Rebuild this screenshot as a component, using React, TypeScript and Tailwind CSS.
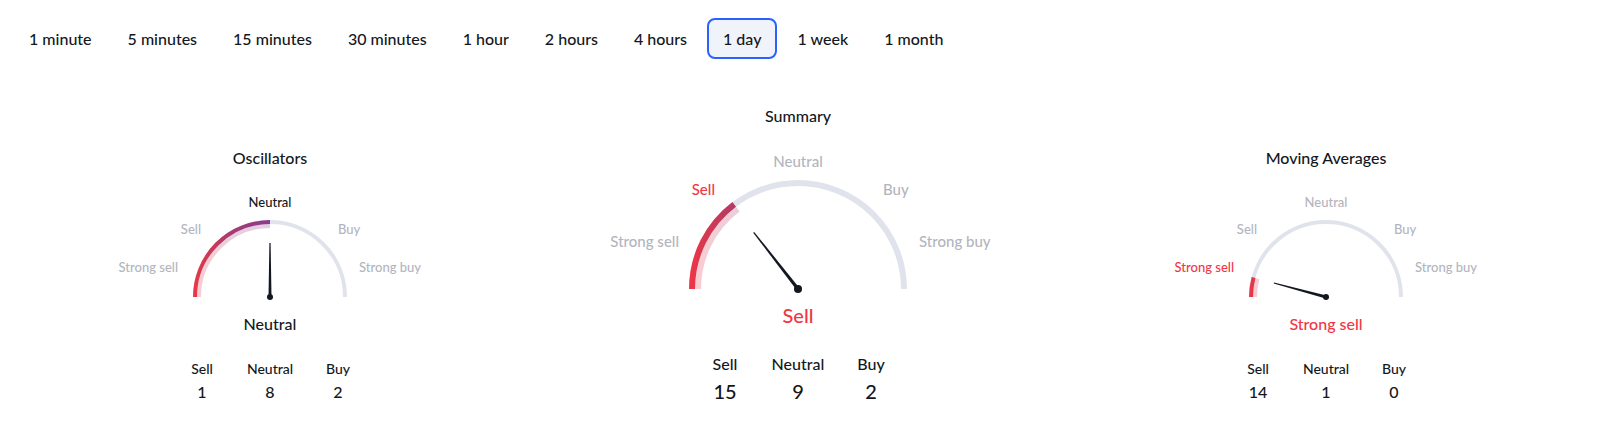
import React from 'react';

const tabs = ['1 minute', '5 minutes', '15 minutes', '30 minutes', '1 hour', '2 hours', '4 hours', '1 day', '1 week', '1 month'];

type Size = 'sm' | 'lg';

const geo = {
  sm: { w: 360, h: 110, ox: 180, oy: 107, r: 75, sw: 4, pr: 71, len: 54, dot: 3, base: 3 },
  lg: { w: 440, h: 145, ox: 220, oy: 140, r: 106, sw: 6, pr: 100, len: 72, dot: 4, base: 3.6 },
};

// label placement per gauge size, written out so tailwind picks them up
const labelCls = {
  sm: {
    box: 'w-[360px] h-[110px] text-[13px] leading-4',
    neutral: 'absolute left-1/2 -translate-x-1/2 top-[4px]',
    sell: 'absolute right-[249px] top-[31px]',
    buy: 'absolute left-[248px] top-[31px]',
    strongSell: 'absolute right-[272px] top-[69px] whitespace-nowrap',
    strongBuy: 'absolute left-[269px] top-[69px] whitespace-nowrap',
  },
  lg: {
    box: 'w-[440px] h-[145px] text-[15px] leading-5',
    neutral: 'absolute left-1/2 -translate-x-1/2 top-[2px]',
    sell: 'absolute right-[303px] top-[30px]',
    buy: 'absolute left-[305px] top-[30px]',
    strongSell: 'absolute right-[339px] top-[82px] whitespace-nowrap',
    strongBuy: 'absolute left-[341px] top-[82px] whitespace-nowrap',
  },
};

function pt(ox: number, oy: number, r: number, a: number) {
  const rad = (a * Math.PI) / 180;
  return [ox - r * Math.cos(rad), oy - r * Math.sin(rad)];
}

function arc(ox: number, oy: number, r: number, a0: number, a1: number) {
  const [x0, y0] = pt(ox, oy, r, a0);
  const [x1, y1] = pt(ox, oy, r, a1);
  return `M ${x0} ${y0} A ${r} ${r} 0 0 1 ${x1} ${y1}`;
}

function Gauge({ id, size, fill, needle, active }: { id: string; size: Size; fill: number; needle: number; active: string }) {
  const g = geo[size];
  const c = labelCls[size];
  const tone = (k: string, red: boolean) =>
    k === active ? (red ? 'text-[#f23645]' : 'text-[#131722]') : 'text-[#b2b5be]';
  const rad = (needle * Math.PI) / 180;
  const dx = -Math.cos(rad);
  const dy = -Math.sin(rad);
  const px = -dy;
  const py = dx;
  const tipX = g.ox + dx * g.len;
  const tipY = g.oy + dy * g.len;
  const needlePts = [
    [g.ox + (px * g.base) / 2, g.oy + (py * g.base) / 2],
    [tipX + px * 0.6, tipY + py * 0.6],
    [tipX - px * 0.6, tipY - py * 0.6],
    [g.ox - (px * g.base) / 2, g.oy - (py * g.base) / 2],
  ]
    .map((p) => p.join(','))
    .join(' ');

  return (
    <div className={`relative ${c.box}`}>
      <svg width={g.w} height={g.h} className="absolute left-0 top-0">
        <defs>
          <linearGradient id={id} gradientUnits="userSpaceOnUse" x1={g.ox - g.r - 4} y1={0} x2={g.ox + g.r + 4} y2={0}>
            <stop offset="0" stopColor="#f23645" />
            <stop offset="0.07" stopColor="#d8384f" />
            <stop offset="0.15" stopColor="#c5395b" />
            <stop offset="0.25" stopColor="#a93a72" />
            <stop offset="0.5" stopColor="#8a3c90" />
            <stop offset="1" stopColor="#2962ff" />
          </linearGradient>
        </defs>
        <path d={arc(g.ox, g.oy, g.r, 0, 180)} fill="none" stroke="#e0e3eb" strokeWidth={g.sw} />
        <path d={arc(g.ox, g.oy, g.pr, 0, fill)} fill="none" stroke={`url(#${id})`} strokeOpacity={0.25} strokeWidth={g.sw} />
        <path d={arc(g.ox, g.oy, g.r, 0, fill)} fill="none" stroke={`url(#${id})`} strokeWidth={g.sw} />
        <polygon points={needlePts} fill="#131722" />
        <circle cx={g.ox} cy={g.oy} r={g.dot} fill="#131722" />
      </svg>
      <span className={`${c.neutral} ${tone('Neutral', false)}`}>Neutral</span>
      <span className={`${c.sell} ${tone('Sell', true)}`}>Sell</span>
      <span className={`${c.buy} ${tone('Buy', false)}`}>Buy</span>
      <span className={`${c.strongSell} ${tone('Strong sell', true)}`}>Strong sell</span>
      <span className={`${c.strongBuy} ${tone('Strong buy', false)}`}>Strong buy</span>
    </div>
  );
}

function Counts({ size, sell, neutral, buy }: { size: Size; sell: number; neutral: number; buy: number }) {
  const cell = size === 'sm' ? 'w-[68px]' : 'w-[73px]';
  const head = size === 'sm' ? 'text-[14px] leading-[18px]' : 'text-[16px] leading-5';
  const num = size === 'sm' ? 'text-[16px] leading-[22px] mt-[3px]' : 'text-[20px] leading-[26px] mt-[4px]';
  const cols: [string, number][] = [
    ['Sell', sell],
    ['Neutral', neutral],
    ['Buy', buy],
  ];
  return (
    <div className="flex">
      {cols.map(([k, v]) => (
        <div key={k} className={`${cell} flex flex-col items-center text-[#131722]`}>
          <span className={head}>{k}</span>
          <span className={num}>{v}</span>
        </div>
      ))}
    </div>
  );
}

export default function App() {
  return (
    <div className="w-[1600px] h-[439px] bg-white font-['Lato',sans-serif] font-medium text-[#131722] overflow-hidden">
      <div className="flex gap-1 pl-[13px] pt-[18px]">
        {tabs.map((t) => (
          <button
            key={t}
            className={`h-[41px] rounded-lg text-[16px] whitespace-nowrap ${
              t === '1 day' ? 'px-[14px] border-2 border-[#2962ff] bg-[#f0f3fa]' : 'px-[15px] border border-transparent'
            }`}
          >
            {t}
          </button>
        ))}
      </div>

      <div className="grid grid-cols-3 pl-[6px] pr-[10px] mt-[47px]">
        <div className="flex flex-col items-center mt-[42px]">
          <h3 className="text-[16px] leading-5">Oscillators</h3>
          <div className="mt-[22px]">
            <Gauge id="g-osc" size="sm" fill={90} needle={90} active="Neutral" />
          </div>
          <div className="mt-[13px] text-[16px] leading-[22px]">Neutral</div>
          <div className="mt-[25px]">
            <Counts size="sm" sell={1} neutral={8} buy={2} />
          </div>
        </div>

        <div className="flex flex-col items-center">
          <h3 className="text-[16px] leading-5">Summary</h3>
          <div className="mt-[23px]">
            <Gauge id="g-sum" size="lg" fill={53} needle={52} active="Sell" />
          </div>
          <div className="mt-[7px] text-[20px] leading-7 text-[#f23645]">Sell</div>
          <div className="mt-[25px]">
            <Counts size="lg" sell={15} neutral={9} buy={2} />
          </div>
        </div>

        <div className="flex flex-col items-center mt-[42px]">
          <h3 className="text-[16px] leading-5">Moving Averages</h3>
          <div className="mt-[22px]">
            <Gauge id="g-ma" size="sm" fill={15} needle={15} active="Strong sell" />
          </div>
          <div className="mt-[13px] text-[16px] leading-[22px] text-[#f23645]">Strong sell</div>
          <div className="mt-[25px]">
            <Counts size="sm" sell={14} neutral={1} buy={0} />
          </div>
        </div>
      </div>
    </div>
  );
}
